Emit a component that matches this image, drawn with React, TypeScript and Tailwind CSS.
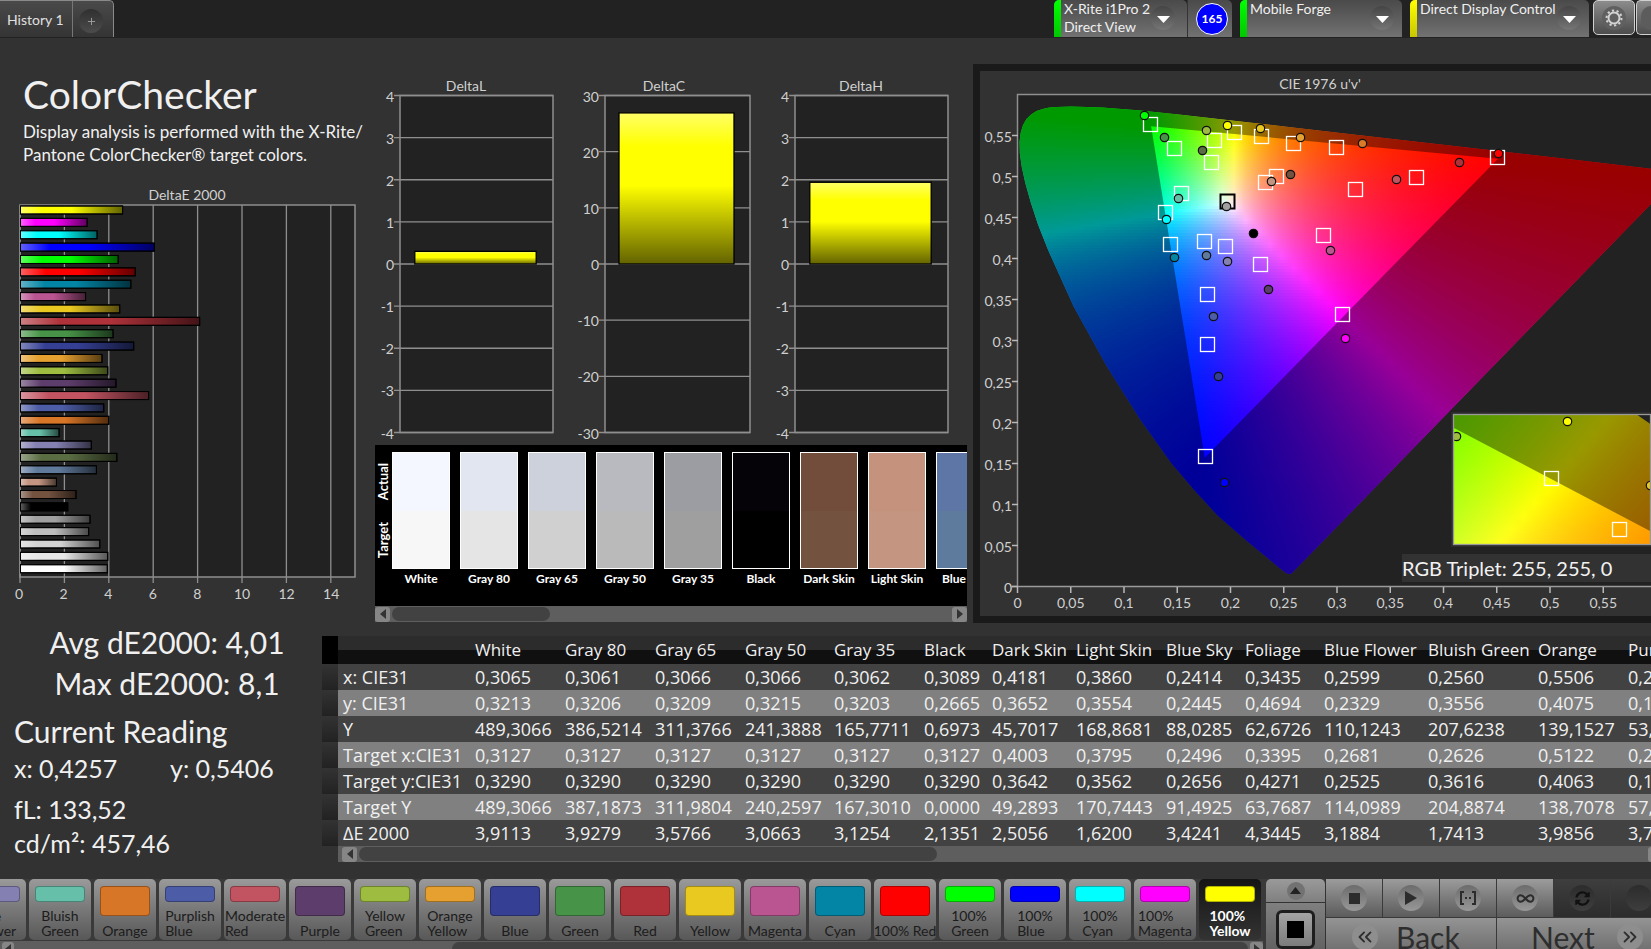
import { ChevronsLeft, ChevronsRight, Infinity as InfinityIcon, Plus } from "lucide-react";
import type { ReactNode } from "react";
import { FaSyncAlt } from "react-icons/fa";

/* ---------- data ---------- */

const deltaE = [
  { color: "#ffff00", value: 4.6 },
  { color: "#ff00ff", value: 3.0 },
  { color: "#00ffff", value: 3.45 },
  { color: "#0000ff", value: 6.03 },
  { color: "#00ff00", value: 4.4 },
  { color: "#ff0000", value: 5.17 },
  { color: "#0385a5", value: 4.97 },
  { color: "#bb5592", value: 2.93 },
  { color: "#e9c820", value: 4.47 },
  { color: "#af323a", value: 8.07 },
  { color: "#479448", value: 4.17 },
  { color: "#353f94", value: 5.1 },
  { color: "#e6a02f", value: 3.67 },
  { color: "#9dbc40", value: 3.93 },
  { color: "#5d3d6b", value: 4.3 },
  { color: "#c25462", value: 5.77 },
  { color: "#4c5ca6", value: 3.75 },
  { color: "#d87627", value: 3.98 },
  { color: "#66bfa9", value: 1.74 },
  { color: "#8480b2", value: 3.19 },
  { color: "#5a6c42", value: 4.34 },
  { color: "#607a9c", value: 3.42 },
  { color: "#c49682", value: 1.62 },
  { color: "#735240", value: 2.5 },
  { color: "#000000", value: 2.13 },
  { color: "#a0a0a0", value: 3.13 },
  { color: "#bebebe", value: 3.07 },
  { color: "#d2d2d2", value: 3.57 },
  { color: "#e6e6e6", value: 3.93 },
  { color: "#ffffff", value: 3.91 },
];

const swatches = [
  { name: "White", actual: "#f4f7ff", target: "#f7f7f7" },
  { name: "Gray 80", actual: "#e2e6f0", target: "#e5e5e5" },
  { name: "Gray 65", actual: "#cdd1db", target: "#d0d0d0" },
  { name: "Gray 50", actual: "#b9bac0", target: "#bababa" },
  { name: "Gray 35", actual: "#9c9da2", target: "#9f9f9f" },
  { name: "Black", actual: "#050307", target: "#000000" },
  { name: "Dark Skin", actual: "#734d3b", target: "#735240" },
  { name: "Light Skin", actual: "#c5927d", target: "#c49682" },
  { name: "Blue Sky", actual: "#5d76a5", target: "#5e7b9e" },
];

const columns = ["White", "Gray 80", "Gray 65", "Gray 50", "Gray 35", "Black", "Dark Skin", "Light Skin", "Blue Sky", "Foliage", "Blue Flower", "Bluish Green", "Orange", "Purplish Blue"];
const columnWidths = [90, 90, 90, 89, 90, 68, 84, 90, 79, 79, 104, 110, 90, 115];

const rows = [
  { label: "x: CIE31", cells: ["0,3065", "0,3061", "0,3066", "0,3066", "0,3062", "0,3089", "0,4181", "0,3860", "0,2414", "0,3435", "0,2599", "0,2560", "0,5506", "0,2096"] },
  { label: "y: CIE31", cells: ["0,3213", "0,3206", "0,3209", "0,3215", "0,3203", "0,2665", "0,3652", "0,3554", "0,2445", "0,4694", "0,2329", "0,3556", "0,4075", "0,1705"] },
  { label: "Y", cells: ["489,3066", "386,5214", "311,3766", "241,3888", "165,7711", "0,6973", "45,7017", "168,8681", "88,0285", "62,6726", "110,1243", "207,6238", "139,1527", "53,2261"] },
  { label: "Target x:CIE31", cells: ["0,3127", "0,3127", "0,3127", "0,3127", "0,3127", "0,3127", "0,4003", "0,3795", "0,2496", "0,3395", "0,2681", "0,2626", "0,5122", "0,2153"] },
  { label: "Target y:CIE31", cells: ["0,3290", "0,3290", "0,3290", "0,3290", "0,3290", "0,3290", "0,3642", "0,3562", "0,2656", "0,4271", "0,2525", "0,3616", "0,4063", "0,1899"] },
  { label: "Target Y", cells: ["489,3066", "387,1873", "311,9804", "240,2597", "167,3010", "0,0000", "49,2893", "170,7443", "91,4925", "63,7687", "114,0989", "204,8874", "138,7078", "57,1182"] },
  { label: "ΔE 2000", cells: ["3,9113", "3,9279", "3,5766", "3,0663", "3,1254", "2,1351", "2,5056", "1,6200", "3,4241", "4,3445", "3,1884", "1,7413", "3,9856", "3,7812"] },
];

const patches = [
  { lines: ["Blue", "Flower"], color: "#8480b2" },
  { lines: ["Bluish", "Green"], color: "#66bfa9" },
  { lines: ["Orange"], color: "#d87627" },
  { lines: ["Purplish", "Blue"], color: "#4c5ca6" },
  { lines: ["Moderate", "Red"], color: "#c25462" },
  { lines: ["Purple"], color: "#5d3d6b" },
  { lines: ["Yellow", "Green"], color: "#9dbc40" },
  { lines: ["Orange", "Yellow"], color: "#e6a02f" },
  { lines: ["Blue"], color: "#353f94" },
  { lines: ["Green"], color: "#479448" },
  { lines: ["Red"], color: "#af323a" },
  { lines: ["Yellow"], color: "#e9c820" },
  { lines: ["Magenta"], color: "#bb5592" },
  { lines: ["Cyan"], color: "#0385a5" },
  { lines: ["100% Red"], color: "#ff0000" },
  { lines: ["100%", "Green"], color: "#00ff00" },
  { lines: ["100%", "Blue"], color: "#0000ff" },
  { lines: ["100%", "Cyan"], color: "#00ffff" },
  { lines: ["100%", "Magenta"], color: "#ff00ff" },
  { lines: ["100%", "Yellow"], color: "#ffff00" },
];

/* ---------- CIE 1976 helpers ---------- */

// spectral locus in u'v', 400nm to 700nm
const locus = [
  [0.2568, 0.0165], [0.2545, 0.0159], [0.2522, 0.0169], [0.2461, 0.0226], [0.2347, 0.035], [0.2161, 0.0549],
  [0.1877, 0.0871], [0.1661, 0.1175], [0.1441, 0.151], [0.1147, 0.2044], [0.0828, 0.2708], [0.0521, 0.3427],
  [0.0282, 0.4117], [0.0188, 0.4425], [0.0119, 0.4698], [0.0068, 0.4935], [0.0035, 0.5131], [0.0017, 0.5293],
  [0.0014, 0.5432], [0.0024, 0.5545], [0.0046, 0.5638], [0.0079, 0.5713], [0.0123, 0.577], [0.0174, 0.5811],
  [0.0231, 0.5837], [0.0293, 0.5853], [0.036, 0.5861], [0.0501, 0.5868], [0.0792, 0.5856], [0.1127, 0.5821],
  [0.1531, 0.5766], [0.2026, 0.5694], [0.2623, 0.5604], [0.3315, 0.5501], [0.4035, 0.5393], [0.5203, 0.5219],
  [0.6234, 0.5065],
];
const gamut = [[0.4507, 0.5229], [0.125, 0.5625], [0.1754, 0.1579]];

const X0 = 1018;
const Y0 = 587;
const SX = 1065;
const SY = 819;

const toPlot = ([u, v]: number[]) => [X0 + u * SX, Y0 - v * SY];
const toPath = (pts: number[][]) => "M" + pts.map((p) => p.map((n) => n.toFixed(1)).join(",")).join("L") + "Z";

function plotColor(px: number, py: number) {
  const u = (px - X0) / SX;
  const v = Math.max((Y0 - py) / SY, 0.005);
  const d = 6 * u - 16 * v + 12;
  const x = (9 * u) / d;
  const y = (4 * v) / d;
  const X = x / y;
  const Z = (1 - x - y) / y;
  const rgb = [
    3.2406 * X - 1.5372 - 0.4986 * Z,
    -0.9689 * X + 1.8758 + 0.0415 * Z,
    0.0557 * X - 0.204 + 1.057 * Z,
  ].map((c) => Math.max(c, 0));
  const max = Math.max(...rgb, 0.0001);
  return `rgb(${rgb.map((c) => Math.round((c / max) * 255)).join(",")})`;
}

type FieldProps = {
  id: string;
  x: number;
  y: number;
  width: number;
  height: number;
  step: number;
  map?: (x: number, y: number) => number[];
};

// chromaticity fill, drawn as thin horizontal gradients
function ColorField({ id, x, y, width, height, step, map = (a, b) => [a, b] }: FieldProps) {
  const count = Math.ceil(height / step);
  const stops = Math.ceil(width / 12);
  return (
    <g shapeRendering="crispEdges">
      {Array.from({ length: count }, (_, r) => {
        const top = y + r * step;
        return (
          <g key={r}>
            <linearGradient id={`${id}-${r}`}>
              {Array.from({ length: stops + 1 }, (_, s) => {
                const [mx, my] = map(x + (s / stops) * width, top + step / 2);
                return <stop key={s} offset={s / stops} stopColor={plotColor(mx, my)} />;
              })}
            </linearGradient>
            <rect x={x} y={top} width={width} height={step} fill={`url(#${id}-${r})`} />
          </g>
        );
      })}
    </g>
  );
}

const targets = [
  [1150, 124], [1174, 148], [1214, 140], [1211, 162], [1234, 132], [1261, 136], [1293, 143], [1265, 182],
  [1276, 176], [1181, 193], [1165, 212], [1170, 244], [1204, 241], [1225, 246], [1260, 264], [1207, 294],
  [1207, 344], [1336, 147], [1355, 189], [1416, 177], [1323, 235], [1497, 157], [1342, 314], [1205, 456],
];

const readings: [number, number, string][] = [
  [1144, 115, "#00ff00"], [1164, 137, "#479448"], [1206, 130, "#9dbc40"], [1202, 150, "#5a6c42"],
  [1227, 125, "#ffff00"], [1260, 128, "#e9c820"], [1300, 137, "#e6a02f"], [1271, 181, "#c49682"],
  [1290, 174, "#735240"], [1178, 198, "#66bfa9"], [1166, 219, "#00ffff"], [1174, 257, "#0385a5"],
  [1206, 255, "#607a9c"], [1227, 261, "#8480b2"], [1253, 233, "#000000"], [1268, 289, "#5d3d6b"],
  [1213, 316, "#4c5ca6"], [1226, 206, "#a0a0a0"], [1362, 143, "#d87a27"], [1459, 162, "#af323a"],
  [1396, 179, "#c25462"], [1330, 250, "#bb5592"], [1345, 338, "#ff00ff"], [1498, 153, "#ff0000"],
  [1218, 376, "#353f94"], [1224, 482, "#0000ff"],
];

// close-up around the selected patch
const fromInset = (x: number, y: number) => [
  1234.3 + (x - 1551.6) * 0.25 + (y - 478.5) * 0.196,
  132.3 - (x - 1551.6) * 0.0494 + (y - 478.5) * 0.152,
];

/* ---------- charts ---------- */

function Target({ x, y, stroke = "#ffffff" }: { x: number; y: number; stroke?: string }) {
  return <rect x={x - 6.5} y={y - 6.5} width="14" height="14" fill="none" stroke={stroke} strokeWidth={stroke === "#000000" ? 2 : 1.3} />;
}

function Reading({ x, y, fill }: { x: number; y: number; fill: string }) {
  return <circle cx={x + 0.5} cy={y + 0.5} r="4.2" fill={fill} stroke="#111" strokeWidth="1.2" />;
}

function CieChart() {
  const locusPath = toPath(locus.map(toPlot));
  const gamutPath = toPath(gamut.map(toPlot));
  return (
    <svg width="671" height="545" viewBox="980 71 671 545" className="block shrink-0" role="img" aria-label="CIE 1976 u'v' diagram">
      <defs>
        <clipPath id="locus"><path d={locusPath} /></clipPath>
        <clipPath id="inset"><rect x="1454" y="415" width="196" height="129" /></clipPath>
      </defs>
      <rect x="1018" y="95" width="640" height="492" fill="#222222" />
      <g clipPath="url(#locus)">
        <ColorField id="cf" x={1018} y={104} width={636} height={474} step={3} />
        <path d={locusPath + gamutPath} fill="#000" fillOpacity="0.4" fillRule="evenodd" />
      </g>
      <path d="M1660 94.5H1017.5V587" fill="none" stroke="#8f8f8f" strokeWidth="1.5" />
      <path d="M1012 586.5H1660" stroke="#9a9a9a" strokeWidth="1.5" />
      <g fill="#d0d0d0" fontSize="14">
        {Array.from({ length: 12 }, (_, i) => {
          const label = String((i * 5) / 100).replace(".", ",");
          return (
            <g key={i}>
              <path d={`M1012 ${586.5 - i * 41}h6M${1017.5 + i * 53.25} 587v6`} stroke="#b8b8b8" strokeWidth="1.5" />
              <text x="1012" y={593 - i * 41} textAnchor="end">{label}</text>
              <text x={1017.5 + i * 53.25} y="608" textAnchor="middle">{label}</text>
            </g>
          );
        })}
        <text x="1320" y="89" textAnchor="middle">CIE 1976 u'v'</text>
      </g>
      {targets.map(([x, y]) => <Target key={`${x}-${y}`} x={x} y={y} />)}
      <Target x={1227} y={201} stroke="#000000" />
      {readings.map(([x, y, fill]) => <Reading key={`${x}-${y}`} x={x} y={y} fill={fill} />)}

      <rect x="1451" y="412" width="204" height="135" fill="#2c2c2c" />
      <g clipPath="url(#inset)">
        <ColorField id="zf" x={1454} y={415} width={198} height={130} step={2} map={fromInset} />
        <path d="M1454 414H1652V532L1454 428Z" fill="#000" fillOpacity="0.4" />
        <path d="M1636 414H1652V425Z" fill="#222222" />
        <Target x={1551} y={478} />
        <Target x={1619} y={529} />
        <Reading x={1567} y={421} fill="#ffff00" />
        <Reading x={1456} y={436} fill="#9dbc40" />
        <Reading x={1650} y={485} fill="#e9c820" />
      </g>
      <rect x="1453.5" y="414.5" width="197" height="130" fill="none" stroke="#9a9a9a" strokeWidth="1.3" />
      <rect x="1402" y="554" width="260" height="28" fill="#323232" />
      <text x="1402" y="576" fontSize="20" fill="#f2f2f2">RGB Triplet: 255, 255, 0</text>
    </svg>
  );
}

function DeltaEChart() {
  return (
    <svg width="375" height="425" viewBox="0 185 375 425" className="block" role="img" aria-label="DeltaE 2000 per patch">
      <defs>
        <linearGradient id="shadeX">
          <stop offset="0" stopColor="#fff" stopOpacity="0.38" />
          <stop offset="0.22" stopColor="#fff" stopOpacity="0" />
          <stop offset="0.5" stopColor="#000" stopOpacity="0" />
          <stop offset="1" stopColor="#000" stopOpacity="0.62" />
        </linearGradient>
      </defs>
      <text x="187" y="200" textAnchor="middle" fontSize="14" fill="#d0d0d0">DeltaE 2000</text>
      <rect x="20" y="205" width="335" height="372" fill="#222222" stroke="#8f8f8f" strokeWidth="1.5" />
      {Array.from({ length: 8 }, (_, i) => (
        <g key={i}>
          <path d={`M${20 + i * 44.4} 205v378`} stroke="#8f8f8f" strokeWidth="1.3" />
          <text x={19 + i * 44.6} y="599" textAnchor="middle" fontSize="14" fill="#d0d0d0">{i * 2}</text>
        </g>
      ))}
      {deltaE.map((bar, i) => (
        <g key={i} stroke="#000">
          <rect x="20.5" y={206 + i * 12.37} width={bar.value * 22.2} height="8" fill={bar.color} />
          <rect x="20.5" y={206 + i * 12.37} width={bar.value * 22.2} height="8" fill="url(#shadeX)" />
        </g>
      ))}
    </svg>
  );
}

type DeltaProps = { title: string; titleX: number; left: number; right: number; max: number; step: number; value: number };

function DeltaChart({ title, titleX, left, right, max, step, value }: DeltaProps) {
  const ticks = Array.from({ length: (2 * max) / step + 1 }, (_, i) => max - i * step);
  const yOf = (n: number) => 189 - (n / max) * 168.5;
  const inset = (right - left) * 0.1;
  return (
    <svg width="195" height="370" viewBox="0 0 195 370" className="block" role="img" aria-label={title}>
      <defs>
        <linearGradient id={`shade-${title}`} x2="0" y2="1">
          <stop offset="0" stopColor="#ffff66" />
          <stop offset="0.22" stopColor="#ffff00" />
          <stop offset="0.48" stopColor="#ffff00" />
          <stop offset="1" stopColor="#636300" />
        </linearGradient>
      </defs>
      <text x={titleX} y="16" textAnchor="middle" fontSize="14" fill="#d0d0d0">{title}</text>
      <rect x={left} y={yOf(max)} width={right - left} height="337" fill="#222222" stroke="#8f8f8f" strokeWidth="1.5" />
      {ticks.map((t) => (
        <g key={t}>
          <path d={`M${left - 6} ${yOf(t)}H${right}`} stroke="#8f8f8f" strokeWidth="1.3" />
          <text x={left - 6} y={yOf(t) + 6} textAnchor="end" fontSize="14" fill="#d0d0d0">{t}</text>
        </g>
      ))}
      <rect x={left + inset - 0.5} y={yOf(value)} width={right - left - inset * 2 - 1} height={189 - yOf(value)} fill={`url(#shade-${title})`} stroke="#000" strokeWidth="1.3" />
    </svg>
  );
}

/* ---------- chrome ---------- */

function ScrollBar({ thumb, label }: { thumb: string; label: string }) {
  return (
    <div className="flex h-4 items-center justify-between bg-[#5e5e5e]">
      <button aria-label={`${label} left`} className="flex h-[15px] w-[15px] shrink-0 items-center justify-center rounded-[3px] bg-[#868686]">
        <svg width="6" height="10" viewBox="0 0 6 10"><path d="M6 0v10L0 5z" fill="#333" /></svg>
      </button>
      <div className="flex-1 px-0.5">
        <div className={`h-[14px] rounded-[7px] bg-[#424242] ${thumb}`} />
      </div>
      <button aria-label={`${label} right`} className="flex h-[15px] w-[15px] shrink-0 items-center justify-center rounded-[3px] bg-[#868686]">
        <svg width="6" height="10" viewBox="0 0 6 10"><path d="M0 0v10l6-5z" fill="#333" /></svg>
      </button>
    </div>
  );
}

function DeviceMenu({ bar, width, caret = "mr-2", children }: { bar: string; width: string; caret?: string; children: ReactNode }) {
  return (
    <button className={`flex h-[37px] overflow-hidden rounded-t-[5px] bg-linear-to-b from-[#4a4a4a] to-[#727272] text-left text-[14px] leading-[18px] text-[#f0f0f0] ${width}`}>
      <span className={`h-full w-[7px] shrink-0 bg-linear-to-b ${bar}`} />
      <span className="flex-1 whitespace-nowrap pl-[3px]">{children}</span>
      <span className={`mt-1.5 flex h-6 w-6 shrink-0 items-center justify-center rounded-full bg-linear-to-b from-[#454545] to-[#767676] ${caret}`}>
        <svg width="13" height="7" viewBox="0 0 13 7" className="mt-0.5"><path d="M0 0h13L6.500 7z" fill="#fff" /></svg>
      </span>
    </button>
  );
}

function Header() {
  return (
    <header className="flex h-[38px] shrink-0 justify-between bg-[#222222]">
      <div className="flex h-[37px] w-[114px] overflow-hidden rounded-tr-[5px] border-r border-t border-[#8a8a8a] bg-linear-to-b from-[#4a4a4a] to-[#343434]">
        <button className="w-[73px] shrink-0 whitespace-nowrap border-r border-[#777] pl-[7px] text-left text-[14px] text-[#e0e0e0]">History 1</button>
        <button aria-label="Add history" className="ml-[6px] mt-2 flex h-6 w-6 items-center justify-center rounded-full bg-linear-to-b from-[#303030] to-[#4c4c4c] text-[#a0a0a0]">
          <Plus size={11} />
        </button>
      </div>
      <div className="flex">
        <div className="mr-2 flex">
          <DeviceMenu bar="from-[#00ff00] to-[#00c800]" width="w-[133px]" caret="mr-3">X-Rite i1Pro 2<br />Direct View</DeviceMenu>
          <div className="flex h-[37px] w-[45px] items-center justify-center rounded-tr-[5px] border-l border-[#333] bg-linear-to-b from-[#4a4a4a] to-[#727272] pl-1">
            <span className="flex h-8 w-8 items-center justify-center rounded-full border border-white bg-[#0000ff] text-[12px] font-bold text-white">165</span>
          </div>
        </div>
        <div className="mr-2"><DeviceMenu bar="from-[#00ff00] to-[#00c800]" width="w-[162px]">Mobile Forge</DeviceMenu></div>
        <div className="mr-1"><DeviceMenu bar="from-[#ffff00] to-[#c8c800]" width="w-[179px]">Direct Display Control</DeviceMenu></div>
        <button aria-label="Settings" className="mr-px flex h-[35px] w-[42px] items-center justify-center rounded-[5px] border border-[#d0d0d0] bg-linear-to-b from-[#8c8c8c] to-[#4c4c4c]">
          <span className="flex h-6 w-6 items-center justify-center rounded-full bg-[#606060]">
            <svg width="20" height="20" viewBox="0 0 20 20" fill="none" stroke="#d4d4d4">
              <circle cx="10" cy="10" r="5.500" strokeWidth="2" />
              <circle cx="10" cy="10" r="7.500" strokeWidth="2" strokeDasharray="2.2 2.512" />
            </svg>
          </span>
        </button>
        <button aria-label="More" className="flex h-[35px] w-[15px] items-center justify-end overflow-hidden rounded-l-[5px] border border-r-0 border-[#d0d0d0] bg-linear-to-b from-[#8c8c8c] to-[#4c4c4c]">
          <span className="h-6 w-2.5 rounded-l-full bg-[#5c5c5c]" />
        </button>
      </div>
    </header>
  );
}

function SwatchStrip() {
  return (
    <section className="w-[592px] bg-black">
      <div className="flex h-[161px] overflow-hidden pt-[7px]">
        <div className="flex h-[117px] w-[17px] shrink-0 flex-col items-center justify-around text-[13px] font-bold leading-[17px] text-white">
          <span className="rotate-180 [writing-mode:vertical-rl]">Actual</span>
          <span className="rotate-180 [writing-mode:vertical-rl]">Target</span>
        </div>
        <div className="flex gap-[10px]">
          {swatches.map((s) => (
            <div key={s.name} className="flex w-[58px] shrink-0 flex-col items-center">
              <div className="flex h-[117px] w-full flex-col border border-white">
                <div className="flex-1" style={{ background: s.actual }} />
                <div className="flex-1" style={{ background: s.target }} />
              </div>
              <span className="mt-0.5 whitespace-nowrap text-[12px] font-bold leading-4 text-white">{s.name}</span>
            </div>
          ))}
        </div>
      </div>
      <ScrollBar thumb="w-[158px]" label="Scroll swatches" />
    </section>
  );
}

function ResultsTable() {
  return (
    <section className="min-w-0 flex-1 overflow-hidden pt-[13px] font-['Open_Sans',sans-serif]">
      <div className="overflow-hidden">
        <table className="w-[1416px] table-fixed border-collapse text-left text-[#f0f0f0]">
          <colgroup>
            <col className="w-4" />
            <col className="w-[132px]" />
            {columnWidths.map((w, i) => <col key={i} style={{ width: w }} />)}
          </colgroup>
          <thead>
            <tr className="h-7 bg-linear-to-b from-[#2c2c2c] from-50% to-[#101010] to-50% text-[17px] leading-7">
              <td className="bg-black p-0" />
              <td className="p-0" />
              {columns.map((c) => <th key={c} scope="col" className="whitespace-nowrap py-0 pl-[5px] pr-0 font-normal">{c}</th>)}
            </tr>
          </thead>
          <tbody>
            {rows.map((row) => (
              <tr key={row.label} className="h-[26px] bg-[#424242] text-[18px] leading-[26px] even:bg-[#808080]">
                <td className="bg-linear-to-b from-[#333] to-[#222] p-0" />
                <th scope="row" className="whitespace-nowrap py-0 pl-[5px] pr-0 font-normal">{row.label}</th>
                {row.cells.map((cell, i) => <td key={i} className="whitespace-nowrap py-0 pl-[5px] pr-0">{cell}</td>)}
              </tr>
            ))}
          </tbody>
        </table>
      </div>
      <div className="-mr-3 ml-4 bg-[#5e5e5e] pl-1"><ScrollBar thumb="w-[578px]" label="Scroll table" /></div>
    </section>
  );
}

function PatchButton({ lines, color, active }: { lines: string[]; color: string; active: boolean }) {
  return (
    <button
      className={`flex h-[61px] w-[62px] shrink-0 flex-col items-center rounded-[5px] pt-[7px] text-[14px] leading-[15px] ${
        active ? "bg-linear-to-b from-[#151515] to-[#333] font-bold text-white" : "bg-linear-to-b from-[#9a9a9a] to-[#585858] text-[#1c1c1c]"
      }`}
    >
      <span
        className={`w-[50px] shrink-0 rounded-[4px] border border-black/30 ${lines.length > 1 ? "h-4" : "h-[30px]"}`}
        style={{ background: color }}
      />
      <span className={`whitespace-nowrap text-left ${lines.length > 1 ? "mt-[6px]" : "mt-[7px]"}`}>
        {lines.map((l) => <span key={l} className="block">{l}</span>)}
      </span>
    </button>
  );
}

function TransportButton({ label, off, children }: { label: string; off?: boolean; children?: ReactNode }) {
  return (
    <button
      aria-label={label}
      disabled={off}
      className={`flex h-[38px] w-[57px] shrink-0 items-center justify-center border-r border-[#3a3a3a] bg-linear-to-b ${
        off ? "from-[#3e3e3e] to-[#2c2c2c]" : "from-[#9c9c9c] to-[#5c5c5c]"
      }`}
    >
      <span className={`flex h-[26px] w-[26px] items-center justify-center rounded-full text-[#2c2c2c] bg-linear-to-b ${off ? "from-[#2c2c2c] to-[#3e3e3e]" : "from-[#6c6c6c] to-[#989898]"}`}>
        {children}
      </span>
    </button>
  );
}

function Footer() {
  return (
    <footer className="mt-auto flex h-[70px] shrink-0 overflow-hidden bg-[#3a3a3a]">
      <div className="min-w-0 flex-1 overflow-hidden">
        <div className="-ml-[36px] flex h-[62px] gap-[3px]">
          {patches.map((p) => <PatchButton key={p.lines.join(" ")} lines={p.lines} color={p.color} active={p.lines.join(" ") === "100% Yellow"} />)}
        </div>
        <div className="flex h-4 items-center bg-[#5e5e5e]">
          <button aria-label="Scroll patches left" className="ml-0.5 flex h-[15px] w-3 items-center justify-center rounded-[3px] bg-[#868686]">
            <svg width="6" height="10" viewBox="0 0 6 10"><path d="M6 0v10L0 5z" fill="#333" /></svg>
          </button>
          <div className="ml-auto h-[14px] w-[796px] rounded-[7px] bg-[#424242]" />
          <button aria-label="Scroll patches right" className="ml-0.5 flex h-[15px] w-[13px] items-center justify-center rounded-[3px] bg-[#868686]">
            <svg width="6" height="10" viewBox="0 0 6 10"><path d="M0 0v10l6-5z" fill="#333" /></svg>
          </button>
        </div>
      </div>
      <div className="ml-[3px] w-[60px] shrink-0 border-r border-[#333]">
        <button aria-label="Expand" className="flex h-6 w-full items-center justify-center rounded-t-[5px] border-b border-[#333] bg-linear-to-b from-[#9a9a9a] to-[#808080]">
          <span className="flex h-[18px] w-[18px] items-center justify-center rounded-full bg-[#727272]">
            <svg width="11" height="7" viewBox="0 0 11 7"><path d="M0 7h11L5.500 0z" fill="#222" /></svg>
          </span>
        </button>
        <div className="flex h-[50px] items-start justify-center bg-linear-to-b from-[#808080] to-[#606060] pt-[7px]">
          <button aria-label="Pattern window" className="flex h-[39px] w-[39px] items-center justify-center rounded-[6px] border-3 border-[#1e1e1e] bg-linear-to-b from-[#a4a4a4] to-[#7c7c7c]">
            <span className="h-[17px] w-[17px] bg-black" />
          </button>
        </div>
      </div>
      <div className="w-[325px] shrink-0 overflow-hidden">
        <div className="flex w-[342px]">
          <TransportButton label="Stop"><span className="h-[11px] w-[11px] bg-[#2c2c2c]" /></TransportButton>
          <TransportButton label="Play"><svg width="12" height="14" viewBox="0 0 12 14"><path d="M0 0v14l12-7z" fill="#2c2c2c" /></svg></TransportButton>
          <TransportButton label="Range">
            <svg width="18" height="14" viewBox="0 0 18 14" fill="none" stroke="#2c2c2c" strokeWidth="2"><path d="M5 1H2v12h3M13 1h3v12h-3M6 7h2M10 7h2" /></svg>
          </TransportButton>
          <TransportButton label="Loop"><InfinityIcon size={19} strokeWidth={2.500} /></TransportButton>
          <TransportButton label="Refresh" off><span className="text-[#111]"><FaSyncAlt size={15} /></span></TransportButton>
          <TransportButton label="Record" off />
        </div>
        <div className="flex w-[342px] pt-px text-[30px] leading-[38px] text-[#2e2e2e]">
          <button className="flex h-[38px] w-[171px] items-center border-r border-[#3a3a3a] bg-linear-to-b from-[#949494] to-[#6a6a6a] pl-[26px]">
            <span className="flex h-[26px] w-[26px] items-center justify-center rounded-full bg-[#8e8e8e]"><ChevronsLeft size={22} /></span>
            <span className="ml-[18px]">Back</span>
          </button>
          <button className="flex h-[38px] w-[171px] items-center bg-linear-to-b from-[#949494] to-[#6a6a6a] pl-[34px]">
            <span>Next</span>
            <span className="ml-[22px] flex h-[26px] w-[26px] items-center justify-center rounded-full bg-[#8e8e8e]"><ChevronsRight size={22} /></span>
          </button>
        </div>
      </div>
    </footer>
  );
}

export default function App() {
  return (
    <div className="flex h-screen flex-col overflow-hidden bg-[#323232] font-['Lato',sans-serif] text-[#f0f0f0]">
      <Header />
      <main>
        <div className="flex">
          <section className="w-[375px] shrink-0 pt-8">
            <div className="h-[115px] pl-[23px]">
              <h1 className="text-[39px] leading-[48px]">ColorChecker</h1>
              <p className="whitespace-nowrap pt-0.5 text-[17px] leading-[23px]">
                Display analysis is performed with the X-Rite/
                <br />
                Pantone ColorChecker® target colors.
              </p>
            </div>
            <DeltaEChart />
          </section>
          <section className="w-[598px] shrink-0 pt-[37px]">
            <div className="flex">
              <DeltaChart title="DeltaL" titleX={91} left={25} right={178} max={4} step={1} value={0.3} />
              <DeltaChart title="DeltaC" titleX={94} left={35} right={180} max={30} step={10} value={26.9} />
              <DeltaChart title="DeltaH" titleX={96} left={30} right={183} max={4} step={1} value={1.94} />
            </div>
            <SwatchStrip />
          </section>
          <section className="mt-[26px] flex h-[559px] min-w-0 flex-1 overflow-hidden border-7 border-r-0 border-[#1a1a1a]">
            <CieChart />
          </section>
        </div>
        <div className="flex">
          <section className="h-[237px] w-[322px] shrink-0 whitespace-nowrap">
            <div className="-mt-px text-center text-[30px] leading-[41px]">
              <p className="pl-3">Avg dE2000: 4,01</p>
              <p className="pl-3">Max dE2000: 8,1</p>
            </div>
            <h2 className="pl-[14px] pt-2 text-[30px] leading-[38px]">Current Reading</h2>
            <div className="flex pl-[14px] text-[25px] leading-9">
              <span className="w-[156px]">x: 0,4257</span>
              <span>y: 0,5406</span>
            </div>
            <p className="pl-[14px] pt-[6px] text-[25px] leading-[34px]">fL: 133,52</p>
            <p className="pl-[14px] text-[25px] leading-[34px]">cd/m²: 457,46</p>
          </section>
          <ResultsTable />
        </div>
      </main>
      <Footer />
    </div>
  );
}
